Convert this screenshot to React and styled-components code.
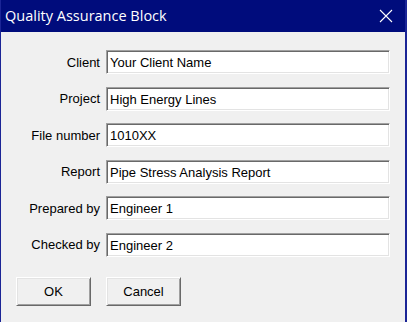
import React from 'react'
import styled, { createGlobalStyle } from 'styled-components'

const GlobalStyle = createGlobalStyle({
    'html, body': {
        margin: 0,
        padding: 0,
        background: '#f0f0f0',
    },
    body: {
        fontFamily: '"Liberation Sans", Arial, sans-serif',
        fontSize: '13px',
        color: '#000',
    }
})

const fields = [
    { label: 'Client', value: 'Your Client Name' },
    { label: 'Project', value: 'High Energy Lines' },
    { label: 'File number', value: '1010XX' },
    { label: 'Report', value: 'Pipe Stress Analysis Report' },
    { label: 'Prepared by', value: 'Engineer 1' },
    { label: 'Checked by', value: 'Engineer 2' },
]

const App = () => {
    return (
        <>
            <GlobalStyle />
            <Window>
                <TitleBar>
                    <Title>Quality Assurance Block</Title>
                    <CloseIcon width="14" height="14" viewBox="0 0 14 14">
                        <path d="M1 1 L13 13 M13 1 L1 13" stroke="#fff" strokeWidth="1.1" fill="none" />
                    </CloseIcon>
                </TitleBar>
                <Body>
                    <Form>
                        {fields.map((f) => (
                            <React.Fragment key={f.label}>
                                <Label>{f.label}</Label>
                                <TextField defaultValue={f.value} />
                            </React.Fragment>
                        ))}
                    </Form>
                    <Buttons>
                        <Button>OK</Button>
                        <Button>Cancel</Button>
                    </Buttons>
                </Body>
            </Window>
        </>
    )
}

const Window = styled.div({
    width: '407px',
    height: '322px',
    boxSizing: 'border-box',
    borderLeft: '1px solid #1b2596',
    borderRight: '2px solid #1b2596',
    background: '#f0f0f0',
    display: 'flex',
    flexDirection: 'column',
    overflow: 'hidden',
})

const TitleBar = styled.div({
    height: '32px',
    flexShrink: 0,
    background: '#000c7c',
    color: '#fff',
    display: 'flex',
    alignItems: 'center',
    justifyContent: 'space-between',
    paddingLeft: '5px',
    paddingRight: '14px',
    marginLeft: '-1px',
    marginRight: '-2px',
})

const Title = styled.div({
    fontFamily: '"Open Sans", "Noto Sans", sans-serif',
    fontSize: '14.5px',
    marginTop: '-1px',
})

const CloseIcon = styled.svg({
    display: 'block',
})

const Body = styled.div({
    paddingTop: '18px',
    paddingLeft: '15px',
    display: 'flex',
    flexDirection: 'column',
    gap: '20px',
})

const Form = styled.div({
    display: 'grid',
    gridTemplateColumns: '84px 284px',
    columnGap: '6px',
    rowGap: '12.5px',
    alignItems: 'center',
})

const Label = styled.label({
    textAlign: 'right',
    whiteSpace: 'nowrap',
})

const TextField = styled.input({
    boxSizing: 'border-box',
    height: '24px',
    width: '284px',
    margin: 0,
    padding: '1px 3px 0',
    font: 'inherit',
    color: '#000',
    background: '#fff',
    border: '1px solid',
    borderColor: '#a0a0a0 #ffffff #ffffff #a0a0a0',
    boxShadow: 'inset 1px 1px 0 #696969, inset -1px -1px 0 #e3e3e3',
    outline: 'none',
})

const Buttons = styled.div({
    display: 'flex',
    gap: '15px',
})

const Button = styled.button({
    boxSizing: 'border-box',
    width: '75px',
    height: '29px',
    margin: 0,
    padding: 0,
    font: 'inherit',
    color: '#000',
    background: '#f0f0f0',
    border: '1px solid',
    borderColor: '#ffffff #696969 #696969 #ffffff',
    boxShadow: 'inset 1px 1px 0 #e3e3e3, inset -1px -1px 0 #a0a0a0',
    cursor: 'pointer',
})

export default App
